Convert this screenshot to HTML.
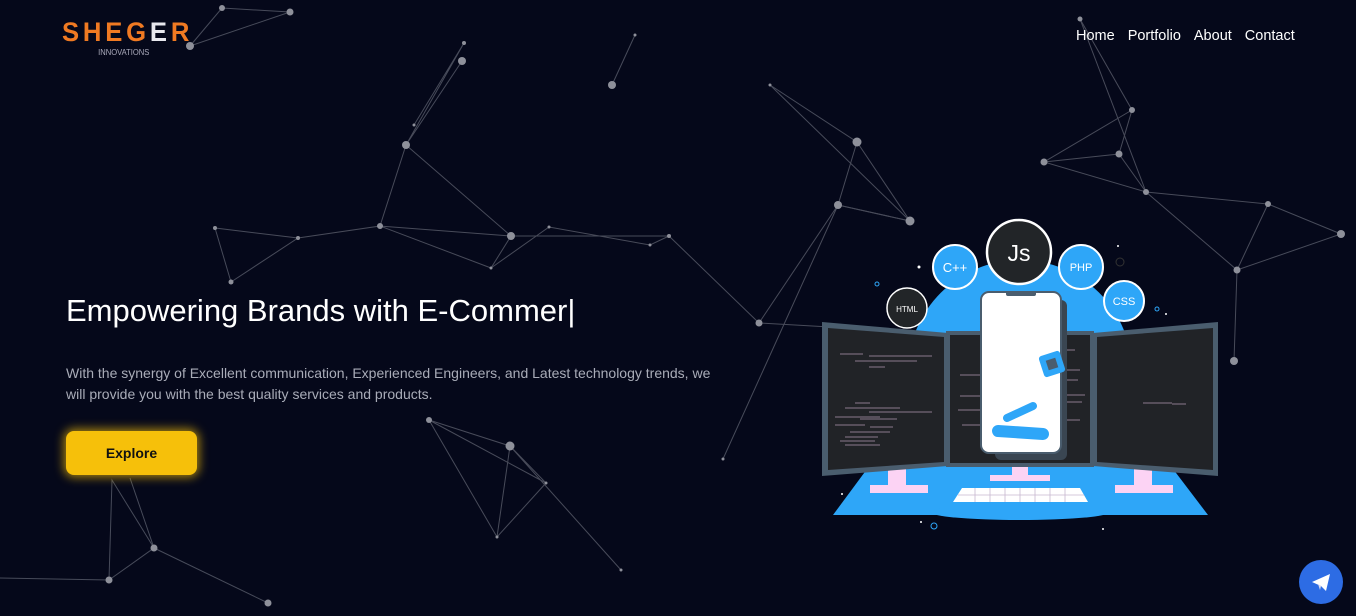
<!DOCTYPE html>
<html><head><meta charset="utf-8"><style>
html,body{margin:0;padding:0}
body{width:1356px;height:616px;overflow:hidden;background:#05081a;font-family:"Liberation Sans",Arial,sans-serif;position:relative}
svg.bg{position:absolute;left:0;top:0}
.logo{position:absolute;left:62px;top:17px;color:#f07a22;font-weight:bold;font-size:27px;letter-spacing:4px;line-height:30px;transform:scaleX(.95);transform-origin:left}
.logo span{color:#e8e8ee}
.logo small{position:absolute;left:38px;top:31px;font-size:8px;letter-spacing:0;color:#aab;font-weight:normal;line-height:10px}
nav{position:absolute;top:28px;left:1076px;font-size:14.5px;color:#fff}
nav a{margin-right:13px;color:#fff;text-decoration:none}
h1{position:absolute;left:66px;top:293px;margin:0;font-weight:normal;font-size:31px;color:#fff;white-space:nowrap}
p{position:absolute;left:66px;top:363px;margin:0;width:660px;font-size:14px;line-height:21px;color:#a9acb8}
.btn{position:absolute;left:66px;top:431px;width:131px;height:44px;border-radius:8px;background:#f6c00a;box-shadow:0 0 10px 2px rgba(246,192,10,.7);font-size:14px;font-weight:bold;color:#111;text-align:center;line-height:44px}
.tg{position:absolute;left:1299px;top:560px;width:44px;height:44px;border-radius:50%;background:#2d6ce4}
</style></head><body>
<svg class="bg" width="1356" height="616" viewBox="0 0 1356 616">
<g stroke="#8a8d99" stroke-width="1" fill="none" opacity=".5">
<path d="M190 46 L222 8 L290 12 L190 46"/>
<path d="M462 61 L406 145 L464 43 L414 125"/>
<path d="M406 145 L380 226 L298 238 L231 282 L215 228 L298 238"/>
<path d="M406 145 L511 236 L491 268 L549 227 L650 245 L669 236 L759 323"/>
<path d="M380 226 L511 236 L669 236"/>
<path d="M380 226 L491 268"/>
<path d="M612 85 L635 35"/>
<path d="M770 85 L857 142 L838 205 L910 221 L770 85"/>
<path d="M857 142 L910 221 L838 205 L759 323 L838 205 L723 459"/>
<path d="M759 323 L830 327"/>
<path d="M1080 19 L1132 110 L1119 154 L1146 192 L1044 162 L1132 110"/>
<path d="M1044 162 L1119 154"/>
<path d="M1146 192 L1268 204 L1237 270 L1341 234 L1268 204"/>
<path d="M1146 192 L1237 270 L1234 361"/>
<path d="M1080 19 L1146 192"/>
<path d="M429 420 L510 446 L546 483 L497 537 L510 446 L621 570"/>
<path d="M429 420 L497 537 M429 420 L546 483"/>
<path d="M109 580 L154 548 L268 603 M154 548 L112 480 L109 580 M0 578 L109 580 M130 478 L154 548"/>
</g>
<g fill="#8e909a">
<circle cx="190" cy="46" r="4"/><circle cx="222" cy="8" r="3"/><circle cx="290" cy="12" r="3.5"/>
<circle cx="462" cy="61" r="4"/><circle cx="464" cy="43" r="2"/><circle cx="406" cy="145" r="4"/><circle cx="414" cy="125" r="1.5"/>
<circle cx="380" cy="226" r="3"/><circle cx="298" cy="238" r="2"/><circle cx="231" cy="282" r="2.5"/><circle cx="215" cy="228" r="2"/>
<circle cx="511" cy="236" r="4"/><circle cx="491" cy="268" r="1.5"/><circle cx="549" cy="227" r="1.5"/><circle cx="650" cy="245" r="1.5"/><circle cx="669" cy="236" r="2"/>
<circle cx="612" cy="85" r="4"/><circle cx="635" cy="35" r="1.5"/><circle cx="770" cy="85" r="1.5"/><circle cx="857" cy="142" r="4.5"/><circle cx="838" cy="205" r="4"/><circle cx="910" cy="221" r="4.5"/><circle cx="759" cy="323" r="3.5"/><circle cx="723" cy="459" r="1.5"/>
<circle cx="1080" cy="19" r="2.5"/><circle cx="1132" cy="110" r="3"/><circle cx="1119" cy="154" r="3.5"/><circle cx="1146" cy="192" r="3"/><circle cx="1044" cy="162" r="3.5"/>
<circle cx="1268" cy="204" r="3"/><circle cx="1237" cy="270" r="3.5"/><circle cx="1341" cy="234" r="4"/><circle cx="1234" cy="361" r="4"/>
<circle cx="429" cy="420" r="3"/><circle cx="510" cy="446" r="4.5"/><circle cx="546" cy="483" r="1.5"/><circle cx="497" cy="537" r="1.5"/><circle cx="621" cy="570" r="1.5"/>
<circle cx="109" cy="580" r="3.5"/><circle cx="154" cy="548" r="3.5"/><circle cx="268" cy="603" r="3.5"/>
</g>
<circle cx="1020" cy="372" r="112" fill="#2ea6f8"/>
<polygon points="870,465 1170,465 1208,515 833,515" fill="#2ea6f8"/>
<ellipse cx="1020" cy="512" rx="90" ry="8" fill="#2ea6f8"/>
<rect x="888" y="465" width="18" height="22" fill="#fcd3f4"/><rect x="870" y="485" width="58" height="8" fill="#fcd3f4"/>
<rect x="1134" y="465" width="18" height="22" fill="#fcd3f4"/><rect x="1115" y="485" width="58" height="8" fill="#fcd3f4"/>
<rect x="1012" y="462" width="16" height="14" fill="#fcd3f4"/><rect x="990" y="475" width="60" height="6" fill="#fcd3f4"/>
<polygon points="962,488 1080,488 1088,502 953,502" fill="#fff"/>
<g stroke="#c7b7d0" stroke-width=".8"><path d="M958 495 H1084 M975 488 V502 M990 488V502 M1005 488V502 M1020 488V502 M1035 488V502 M1050 488V502 M1065 488V502"/></g>
<polygon points="822,322 948,333 948,466 822,476" fill="#4a5d6e"/>
<polygon points="828,328 944,337 944,462 828,470" fill="#212327"/>
<rect x="946" y="331" width="148" height="136" fill="#4a5d6e"/>
<rect x="950" y="335" width="140" height="128" fill="#212327"/>
<polygon points="1093,333 1218,322 1218,476 1093,466" fill="#4a5d6e"/>
<polygon points="1097,337 1213,328 1213,470 1097,462" fill="#212327"/>
<g stroke="#a790a8" stroke-width="1" opacity=".8">
<path d="M840 354 H863 M869 356 H932 M855 361 H917 M869 367 H885 M855 403 H870 M845 408 H900 M869 412 H932 M835 417 H880 M860 419 H897 M835 425 H865 M870 427 H893 M850 432 H890 M845 437 H878 M840 441 H875 M845 445 H880 M960 375 H980 M960 396 H980 M958 410 H980 M962 425 H980 M1143 403 H1172 M1172 404 H1186"/>
<path d="M1060 350 H1075 M1060 370 H1080 M1060 380 H1078 M1060 395 H1085 M1060 402 H1082 M1060 420 H1080"/>
</g>
<rect x="995" y="300" width="72" height="160" rx="6" fill="#3a4652"/>
<rect x="981" y="292" width="80" height="161" rx="8" fill="#fff" stroke="#4a5d6e" stroke-width="2"/>
<rect x="1006" y="291" width="30" height="5" rx="2" fill="#4a5d6e"/>
<rect x="1041" y="353" width="22" height="22" rx="3" fill="#2ea6f8" transform="rotate(-18 1052 364)"/>
<rect x="1047" y="359" width="10" height="10" fill="#4a5d6e" transform="rotate(-18 1052 364)"/>
<line x1="1007" y1="418" x2="1033" y2="406" stroke="#2ea6f8" stroke-width="8" stroke-linecap="round"/>
<line x1="998" y1="431" x2="1043" y2="434" stroke="#2ea6f8" stroke-width="12" stroke-linecap="round"/>
<g font-family="Liberation Sans,Arial,sans-serif" text-anchor="middle">
<circle cx="1019" cy="252" r="32" fill="#222528" stroke="#fff" stroke-width="2.5"/><text x="1019" y="261" fill="#fff" font-size="23">Js</text>
<circle cx="955" cy="267" r="22" fill="#2ea6f8" stroke="#fff" stroke-width="2"/><text x="955" y="272" fill="#fff" font-size="13">C++</text>
<circle cx="1081" cy="267" r="22" fill="#2ea6f8" stroke="#fff" stroke-width="2"/><text x="1081" y="271" fill="#fff" font-size="11">PHP</text>
<circle cx="1124" cy="301" r="20" fill="#2ea6f8" stroke="#fff" stroke-width="2"/><text x="1124" y="305" fill="#fff" font-size="11">CSS</text>
<circle cx="907" cy="308" r="20" fill="#222528" stroke="#fff" stroke-width="1.5"/><text x="907" y="312" fill="#fff" font-size="8">HTML</text>
</g>
<g fill="#fff"><circle cx="919" cy="267" r="1.5"/><circle cx="1118" cy="246" r="1"/><circle cx="1166" cy="314" r="1"/><circle cx="921" cy="522" r="1"/><circle cx="1103" cy="529" r="1"/><circle cx="842" cy="494" r="1"/></g>
<g fill="none" stroke="#2ea6f8"><circle cx="877" cy="284" r="2"/><circle cx="1157" cy="309" r="2"/><circle cx="934" cy="526" r="3"/></g>
<circle cx="1120" cy="262" r="4" fill="none" stroke="#333"/>
</svg>
<div class="logo">SHEG<span>E</span>R<small>INNOVATIONS</small></div>
<nav><a>Home</a><a>Portfolio</a><a>About</a><a>Contact</a></nav>
<h1>Empowering Brands with E-Commer|</h1>
<p>With the synergy of Excellent communication, Experienced Engineers, and Latest technology trends, we will provide you with the best quality services and products.</p>
<div class="btn">Explore</div>
<div class="tg"><svg width="44" height="44" viewBox="0 0 44 44"><path d="M13 22 L31 14 L27 31 L22 26 Z" fill="#fff"/><path d="M22 26 L21 30 L19 24 Z" fill="#dde"/></svg></div>
</body></html>
